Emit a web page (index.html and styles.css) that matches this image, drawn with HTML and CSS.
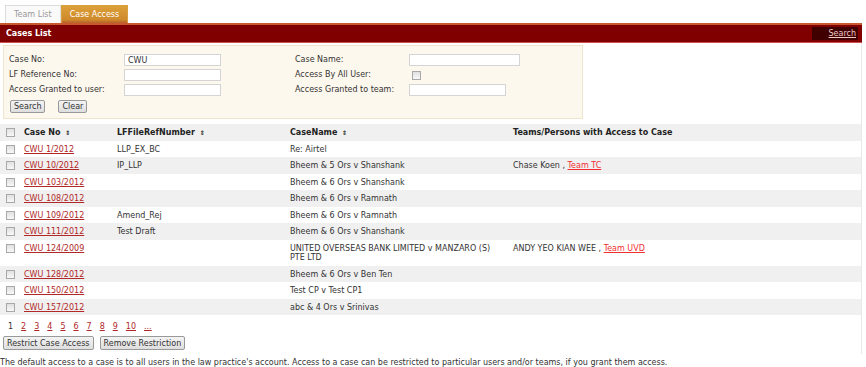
FILE: index.html
```html
<!DOCTYPE html>
<html lang="en">
  <head>
    <meta charset="UTF-8" />
    <title>Case Access</title>
    <link rel="stylesheet" href="styles.css">
  </head>
  <body>
    <div class="tabs">
      <a class="tab">Team List</a>
      <a class="tab active">Case Access</a>
    </div>

    <div class="panel">
      <div class="panel-head">
        <h2>Cases List</h2>
        <a class="head-search">Search</a>
      </div>

      <div class="panel-body">
        <form class="filter">
          <div class="filter-grid">
            <label>Case No:</label>
            <input type="text" value="CWU" class="w96" />
            <label>Case Name:</label>
            <input type="text" class="w110" />

            <label>LF Reference No:</label>
            <input type="text" class="w96" />
            <label>Access By All User:</label>
            <span><input type="checkbox" class="chk" /></span>

            <label>Access Granted to user:</label>
            <input type="text" class="w96" />
            <label>Access Granted to team:</label>
            <input type="text" class="w96" />
          </div>
          <div class="filter-buttons">
            <button type="button" class="btn">Search</button>
            <button type="button" class="btn">Clear</button>
          </div>
        </form>

        <table class="cases">
          <thead>
            <tr>
              <th class="c-chk"><input type="checkbox" class="chk" /></th>
              <th class="c-no">Case No <span class="sort">&#8661;</span></th>
              <th class="c-ref">LFFileRefNumber <span class="sort">&#8661;</span></th>
              <th class="c-name">CaseName <span class="sort">&#8661;</span></th>
              <th>Teams/Persons with Access to Case</th>
            </tr>
          </thead>
          <tbody>
            <tr>
              <td><input type="checkbox" class="chk" /></td>
              <td><a class="case-link">CWU 1/2012</a></td>
              <td>LLP_EX_BC</td>
              <td>Re: Airtel</td>
              <td></td>
            </tr>
            <tr>
              <td><input type="checkbox" class="chk" /></td>
              <td><a class="case-link">CWU 10/2012</a></td>
              <td>IP_LLP</td>
              <td>Bheem &amp; 5 Ors v Shanshank</td>
              <td>Chase Koen , <a class="team-link">Team TC</a></td>
            </tr>
            <tr>
              <td><input type="checkbox" class="chk" /></td>
              <td><a class="case-link">CWU 103/2012</a></td>
              <td></td>
              <td>Bheem &amp; 6 Ors v Shanshank</td>
              <td></td>
            </tr>
            <tr>
              <td><input type="checkbox" class="chk" /></td>
              <td><a class="case-link">CWU 108/2012</a></td>
              <td></td>
              <td>Bheem &amp; 6 Ors v Ramnath</td>
              <td></td>
            </tr>
            <tr>
              <td><input type="checkbox" class="chk" /></td>
              <td><a class="case-link">CWU 109/2012</a></td>
              <td>Amend_Rej</td>
              <td>Bheem &amp; 6 Ors v Ramnath</td>
              <td></td>
            </tr>
            <tr>
              <td><input type="checkbox" class="chk" /></td>
              <td><a class="case-link">CWU 111/2012</a></td>
              <td>Test Draft</td>
              <td>Bheem &amp; 6 Ors v Shanshank</td>
              <td></td>
            </tr>
            <tr>
              <td><input type="checkbox" class="chk" /></td>
              <td><a class="case-link">CWU 124/2009</a></td>
              <td></td>
              <td>UNITED OVERSEAS BANK LIMITED v MANZARO (S)<br />PTE LTD</td>
              <td>ANDY YEO KIAN WEE , <a class="team-link">Team UVD</a></td>
            </tr>
            <tr>
              <td><input type="checkbox" class="chk" /></td>
              <td><a class="case-link">CWU 128/2012</a></td>
              <td></td>
              <td>Bheem &amp; 6 Ors v Ben Ten</td>
              <td></td>
            </tr>
            <tr>
              <td><input type="checkbox" class="chk" /></td>
              <td><a class="case-link">CWU 150/2012</a></td>
              <td></td>
              <td>Test CP v Test CP1</td>
              <td></td>
            </tr>
            <tr>
              <td><input type="checkbox" class="chk" /></td>
              <td><a class="case-link">CWU 157/2012</a></td>
              <td></td>
              <td>abc &amp; 4 Ors v Srinivas</td>
              <td></td>
            </tr>
          </tbody>
        </table>

        <div class="pager">
          <span>1</span>
          <a>2</a>
          <a>3</a>
          <a>4</a>
          <a>5</a>
          <a>6</a>
          <a>7</a>
          <a>8</a>
          <a>9</a>
          <a>10</a>
          <a>...</a>
        </div>

        <div class="actions">
          <button type="button" class="btn">Restrict Case Access</button>
          <button type="button" class="btn">Remove Restriction</button>
        </div>
      </div>
    </div>

    <p class="note">
      The default access to a case is to all users in the law practice's account. Access to a case can be restricted to particular users and/or teams, if you grant them access.
    </p>
  </body>
</html>
```

FILE: styles.css
```css
* {
  box-sizing: border-box;
}

body {
  margin: 0;
  padding: 5px 0 0 0;
  font-family: "DejaVu Sans", Verdana, sans-serif;
  font-size: 8px;
  color: #333;
  background: #fff;
}

/* tabs */
.tabs {
  display: flex;
  padding-left: 5px;
  height: 18px;
}
.tab {
  display: block;
  padding: 4px 8px 0 8px;
  color: #999;
  border: 1px solid #ddd;
  border-bottom: none;
  background: #fafafa;
}
.tab.active {
  color: #fff;
  border-color: #d9a040;
  background: linear-gradient(#dca038, #cf8a2c 80%, #b8602a);
}

/* panel */
.panel {
  margin-right: 4px;
}
.panel-head {
  display: flex;
  align-items: center;
  justify-content: space-between;
  height: 20px;
  background: #800000;
  border-top: 2px solid #c8582e;
  border-bottom: 1px solid #d05050;
}
.panel-head h2 {
  margin: 0 0 0 6px;
  font-size: 8px;
  font-weight: bold;
  color: #fff;
}
.head-search {
  display: block;
  width: 46px;
  height: 13px;
  margin-right: 4px;
  padding: 2px 2px 0 0;
  text-align: right;
  background: #400000;
  color: #f0c8c8;
  text-decoration: underline;
}

.panel-body {
  border-right: 1px solid #e8e8e8;
  padding: 2px 0 4px 0;
}

/* filter form */
.filter {
  width: 580px;
  margin-left: 3px;
  padding: 8px 0 5px 5px;
  background: #fdf8ee;
  border: 1px solid #f0e4cc;
}
.filter-grid {
  display: grid;
  grid-template-columns: 115px 171px 114px 1fr;
  row-gap: 3px;
  align-items: center;
}
.filter-grid label {
  line-height: 12px;
}
.filter input[type="text"] {
  height: 12px;
  border: 1px solid #d4d4d4;
  background: #fff;
  padding: 0 3px;
  font-family: inherit;
  font-size: 8px;
  color: #333;
}
.w96 {
  width: 97px;
}
.w110 {
  width: 111px;
}
.filter-grid .chk {
  margin-left: 3px;
}
.filter-buttons {
  display: flex;
  gap: 13px;
  margin-top: 4px;
  padding-left: 1px;
}

.btn {
  height: 13px;
  padding: 0 3px;
  font-family: inherit;
  font-size: 8px;
  color: #333;
  background: linear-gradient(#f4f4f4, #dedede);
  border: 1px solid #999;
  border-radius: 2px;
}

.chk {
  appearance: none;
  display: block;
  width: 9px;
  height: 9px;
  margin: 0;
  border: 1px solid #a8a8a8;
  background: linear-gradient(#e0e0e0, #f8f8f8);
}

/* table */
.cases {
  width: 100%;
  margin-top: 5px;
  border-collapse: collapse;
}
.cases th,
.cases td {
  text-align: left;
  vertical-align: top;
  padding: 4px 4px 3px 4px;
  line-height: 9.5px;
}
.cases th {
  background: #f0f0f0;
  font-weight: bold;
  color: #222;
}
.cases tbody tr:nth-child(even) {
  background: #f0f0f0;
}
.cases .c-chk {
  width: 20px;
  padding-left: 6px;
}
.cases td:first-child {
  padding-left: 6px;
}
.cases .c-no {
  width: 93px;
}
.cases .c-ref {
  width: 173px;
}
.cases .c-name {
  width: 223px;
}
.sort {
  font-size: 6px;
  margin-left: 2px;
}
.case-link {
  color: #b02828;
  text-decoration: underline;
}
.team-link {
  color: #f03030;
  text-decoration: underline;
}

/* pager */
.pager {
  display: flex;
  gap: 8px;
  padding: 7px 0 0 8px;
  height: 21px;
}
.pager a {
  color: #b02828;
  text-decoration: underline;
}

.actions {
  display: flex;
  gap: 6px;
  padding-left: 3px;
}
.actions .btn {
  height: 14px;
}

.note {
  margin: 4px 0 0 0;
}
```
